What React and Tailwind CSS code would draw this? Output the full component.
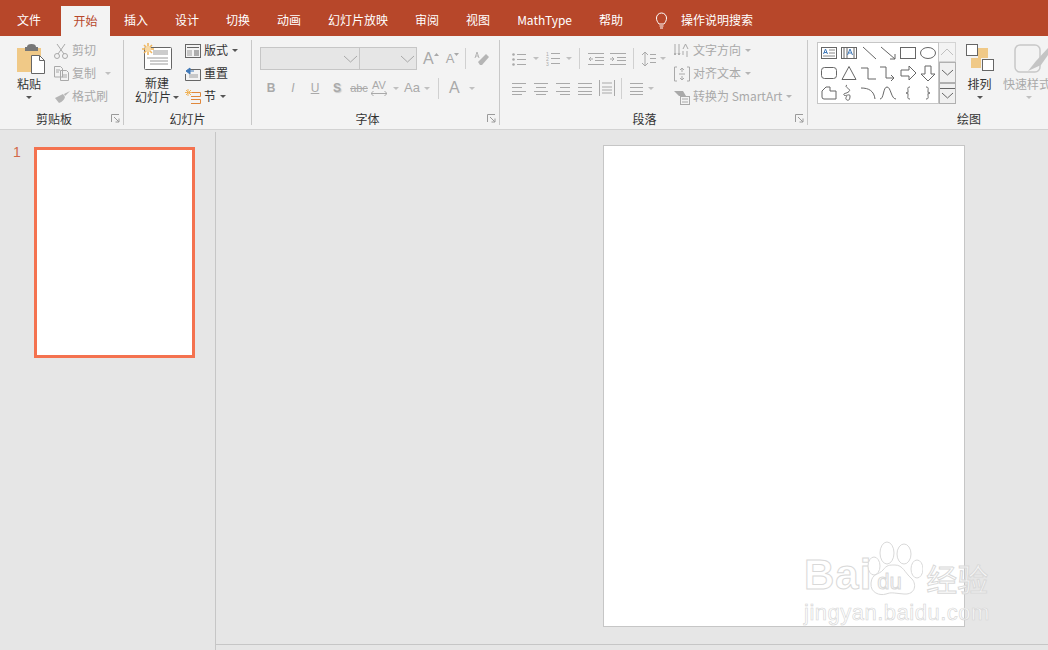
const off = "text-[#a9a9a9]"
const on = "text-[#333333]"

function Ico({ w, h, className = "", children }) {
  return (
    <svg width={w} height={h} viewBox={`0 0 ${w} ${h}`} fill="none" stroke="currentColor" strokeWidth="1" className={`shrink-0 ${className}`}>
      {children}
    </svg>
  )
}

function Caret({ className = "text-[#a9a9a9]" }) {
  return (
    <svg width="6" height="3" viewBox="0 0 6 3" className={`shrink-0 ${className}`}>
      <path d="M0 0h6L3 3z" fill="currentColor" />
    </svg>
  )
}

function Launcher() {
  return (
    <Ico w={9} h={9} className="text-[#9a9a9a]">
      <path d="M.5 8V.5H8M3 3l5 5M8 4.500V8H4.500" />
    </Ico>
  )
}

function Group({ className, label, labelClass = "", launcher, children }) {
  return (
    <div className={`flex flex-col shrink-0 ${className}`}>
      <div className="flex h-[73px] pt-[3px]">{children}</div>
      <div className={`flex h-[20px] items-center justify-center relative text-xs text-[#333333] ${labelClass}`}>
        {label}
        {launcher && <span className="absolute right-[3px] top-[5px] flex"><Launcher /></span>}
      </div>
    </div>
  )
}

function Sep() {
  return <div className="w-px mt-[4px] mb-[4px] bg-[#c8c8c8] shrink-0" />
}

function VBar({ className = "" }) {
  return <div className={`w-px h-[21px] bg-[#d0d0d0] shrink-0 ${className}`} />
}

function Row({ icon, text, color = off, caret, iconBox = "w-[18px]" }) {
  return (
    <div className={`flex items-center h-[23px] text-xs whitespace-nowrap ${color}`}>
      <span className={`flex ${iconBox}`}>{icon}</span>
      <span className="pb-[2px]">{text}</span>
      {caret && <span className="flex ml-[4px]"><Caret className={color === on ? "text-[#555555]" : "text-[#b5b5b5]"} /></span>}
    </div>
  )
}

function HLines({ w = 14, ys, x0 = [], stroke }) {
  return (
    <Ico w={w} h={14} className="text-[#a9a9a9]">
      {ys.map((y, i) => (
        <path key={i} d={`M${x0[i] ?? 0} ${y + 0.5}H${stroke ? stroke[i] : w}`} />
      ))}
    </Ico>
  )
}

const galleryIcons = [
  <g key="0"><rect x="1.5" y="3.5" width="15" height="11" /><path d="M9 6h6M9 9h6M3 12h12" stroke="#888888" /><path d="M3.500 10l2-5 2 5M4 8.500h3" stroke="#3f78b8" /></g>,
  <g key="1"><rect x="1.5" y="3.5" width="15" height="11" /><path d="M4 4v10M7 4v10M14 4v10" /><path d="M7.500 11l2.500-6 2.500 6M8.500 9h3" stroke="#3f78b8" /></g>,
  <path key="2" d="M3 3l13 12" />,
  <path key="3" d="M2 3l14 12M11 15h5v-5" />,
  <rect key="4" x="1.5" y="3.5" width="15" height="11" />,
  <ellipse key="5" cx="9" cy="9" rx="7.5" ry="5.5" />,
  <rect key="6" x="1.5" y="3.5" width="15" height="11" rx="3" />,
  <path key="7" d="M9 2.500L16 15.500H2z" />,
  <path key="8" d="M1 4h7v11h8" />,
  <path key="9" d="M1 3h6v11h8M12 11l3 3-3 3" />,
  <path key="10" d="M2 6h8V2l7 7-7 7v-4H2z" />,
  <path key="11" d="M6 2h6v8h4l-7 7-7-7h4z" />,
  <path key="12" d="M2 7l4-4h4v4h6v8H4q-2 0-2-2z" />,
  <path key="13" d="M7 1c-4 2 5 4 2 6.500S3 9 4 11s6-2 6 1-1 5-3 4-1-3 0-4" />,
  <path key="14" d="M1 4c8 0 13 3 14 11" />,
  <path key="15" d="M1 15C5 15 4 3 8 3s4 12 9 12" />,
  <path key="16" d="M11 3C8 3 9 5 9 7s0 2-2 2c2 0 2 0 2 2s-1 4 2 4" />,
  <path key="17" d="M7 3c3 0 2 2 2 4s0 2 2 2c-2 0-2 0-2 2s1 4-2 4" />,
]

export default function App() {
  const tabs = ["插入", "设计", "切换", "动画", "幻灯片放映", "审阅", "视图", "MathType", "帮助"]
  return (
    <div className="relative w-[1048px] h-[650px] overflow-hidden flex flex-col bg-[#e6e6e6] font-['Noto_Sans_CJK_SC','Noto_Sans',sans-serif]">
      {/* tabs */}
      <div className="flex h-[36px] bg-[#b7472a] text-white text-xs shrink-0">
        <div className="ml-[4px] mr-[7px] px-[13px] flex items-center pt-[4px]">文件</div>
        <div className="mt-[6px] mr-px w-[49px] justify-center bg-[#f3f3f3] text-[#b7472a] flex items-center">开始</div>
        {tabs.map(t => (
          <div key={t} className="mr-px px-[13px] flex items-center pt-[4px] whitespace-nowrap">{t}</div>
        ))}
        <div className="ml-[19px] flex items-center pt-[4px]">
          <Ico w={11} h={17} className="text-white">
            <path d="M3 12C1.500 10 .5 8.500 .5 6a5 5 0 0 1 10 0c0 2.500-1 4-2.500 6zM3.500 14h4M4 16h3" />
          </Ico>
          <span className="ml-[14px]">操作说明搜索</span>
        </div>
      </div>

      {/* ribbon */}
      <div className="flex h-[94px] bg-[#f3f3f3] border-b border-[#d2d2d2] shrink-0 overflow-hidden">
        <Group className="w-[123px]" label="剪贴板" labelClass="pr-[15px]" launcher>
          <div className="ml-[17px] w-[28px] flex flex-col">
            <svg width="28" height="30" viewBox="0 0 28 30" className="mt-[5px]">
              <path d="M0 4h24v24H0z" fill="#f0c987" />
              <path d="M10 3q0-3 4.500-3T19 3h2v4H8V3z" fill="#777777" />
              <path d="M14.500 11.500h8l5 5v13h-13z" fill="#ffffff" stroke="#666666" />
              <path d="M22.500 11.500v5h5" fill="none" stroke="#666666" />
            </svg>
            <span className="mt-[2px] text-xs leading-4 text-[#333333] whitespace-nowrap">粘贴</span>
            <span className="flex justify-center mt-[4px] pr-[4px]"><Caret className="text-[#555555]" /></span>
          </div>
          <div className="ml-[9px] flex flex-col">
            <Row text="剪切" icon={<Ico w={14} h={16} className="text-[#a9a9a9]"><path d="M3 1l7 10M11 1L4 11" /><circle cx="3" cy="13" r="2.500" /><circle cx="11" cy="13" r="2.500" /></Ico>} />
            <div className="flex items-center">
              <Row text="复制" icon={<Ico w={15} h={15} className="text-[#a9a9a9]"><path d="M.5.5h6l2 2V11H.5zM6.500 4.500h6l2 2v8h-8zM2 4h4M2 6h3M8 9h5M8 11h5" /></Ico>} />
              <span className="flex ml-[9px]"><Caret className="text-[#c0c0c0]" /></span>
            </div>
            <Row text="格式刷" icon={<Ico w={16} h={13} className="text-[#b5b5b5]"><path d="M16 1l-6 3 1 2zM9 4L1 8l4 5q5-2 6-6z" fill="currentColor" stroke="none" /></Ico>} />
          </div>
        </Group>
        <Sep />

        <Group className="w-[127px]" label="幻灯片">
          <div className="ml-[11px] w-[50px] flex flex-col items-start">
            <svg width="30" height="28" viewBox="0 0 30 28" className="mt-[4px] ml-[7px]">
              <rect x="2.500" y="4.500" width="27" height="22" rx="1" fill="#ffffff" stroke="#666666" />
              <rect x="11" y="7" width="15" height="5" fill="#cccccc" />
              <path d="M5 15h21M8 18h18M8 21h18" stroke="#9a9a9a" />
              <path d="M6 0v12M0 6h12M2 2l8 8M10 2l-8 8" stroke="#f0b45a" strokeWidth="1.500" />
              <circle cx="6" cy="6" r="3" fill="#f7d9a5" />
            </svg>
            <span className="mt-[5px] ml-[10px] text-xs leading-[14px] text-[#333333]">新建</span>
            <span className="flex items-center text-xs leading-[14px] text-[#333333] whitespace-nowrap">幻灯片<span className="flex ml-[2px]"><Caret className="text-[#555555]" /></span></span>
          </div>
          <div className="flex flex-col">
            <Row color={on} caret text="版式" iconBox="w-[19px]" icon={<Ico w={16} h={14} className="text-[#666666]"><rect x=".5" y=".5" width="15" height="13" /><path d="M2 3.500h12" /><rect x="2" y="6" width="5" height="6" fill="#c8c8c8" stroke="none" /><path d="M9 7h5M9 9h5M9 11h5" /></Ico>} />
            <Row color={on} text="重置" iconBox="w-[19px]" icon={<Ico w={16} h={14} className="text-[#666666]"><path d="M5 2.500h10.500v11H.5V7" /><rect x="4" y="7" width="9" height="4" fill="#c8c8c8" stroke="none" /><path d="M1 4l4-3v6zM4 4h5" fill="#3f78b8" stroke="#3f78b8" /></Ico>} />
            <Row color={on} caret text="节" iconBox="w-[19px]" icon={<Ico w={16} h={15} className="text-[#666666]"><path d="M6 3.500h9.500v4H6M6 10.500h9.500v4H6" stroke="#e0883c" /><path d="M3 0v7M0 3.500h7M1 1l5 5M6 1L1 6" stroke="#f0b45a" /></Ico>} />
          </div>
        </Group>
        <Sep />

        <Group className="w-[247px]" label="字体" labelClass="pr-[16px]" launcher>
          <div className="pl-[8px] flex flex-col">
            <div className="mt-[8px] flex items-center h-[23px]">
              <div className="w-[100px] h-[23px] bg-[#e6e6e6] border border-[#c6c6c6] flex items-center justify-end pr-[1px]">
                <Ico w={15} h={8} className="text-[#a9a9a9]"><path d="M1 1l6.500 6L14 1" /></Ico>
              </div>
              <div className="w-[58px] h-[23px] -ml-px bg-[#e6e6e6] border border-[#c6c6c6] flex items-center justify-end pr-[1px]">
                <Ico w={15} h={8} className="text-[#a9a9a9]"><path d="M1 1l6.500 6L14 1" /></Ico>
              </div>
              <span className={`ml-[6px] text-[16px] leading-none font-['Liberation_Sans'] ${off}`}>A</span>
              <span className="flex mb-[9px]"><svg width="5" height="3"><path d="M0 3h5L2.500 0z" fill="#a9a9a9" /></svg></span>
              <span className={`ml-[7px] text-[13px] leading-none font-['Liberation_Sans'] ${off}`}>A</span>
              <span className="flex mb-[9px]"><svg width="5" height="3"><path d="M0 0h5L2.500 3z" fill="#a9a9a9" /></svg></span>
              <VBar className="ml-[6px]" />
              <Ico w={16} h={16} className="ml-[8px] text-[#b5b5b5]"><path d="M4 11l8-8 3 3-7 8H6z" fill="currentColor" stroke="none" /><path d="M1 7l2-6 2 6M2 5h2" /></Ico>
            </div>
            <div className={`mt-[7px] flex items-center h-[22px] text-xs font-['Liberation_Sans'] ${off}`}>
              <span className="w-[22px] text-center font-bold">B</span>
              <span className="w-[22px] text-center italic">I</span>
              <span className="w-[22px] text-center underline">U</span>
              <span className="w-[22px] text-center font-bold [text-shadow:1px_1px_1px_#c8c8c8]">S</span>
              <span className="w-[22px] text-center line-through text-[11px]">abc</span>
              <span className="w-[18px] flex flex-col items-center text-[11px] leading-[11px]">AV
                <Ico w={16} h={5} className="text-[#a9a9a9]"><path d="M0 2.500h16M2.500 0L0 2.500 2.500 5M13.500 0L16 2.500 13.500 5" /></Ico>
              </span>
              <span className="flex ml-[5px]"><Caret className="text-[#c0c0c0]" /></span>
              <span className="ml-[5px] w-[16px] text-[13px] text-center">Aa</span>
              <span className="flex ml-[4px]"><Caret className="text-[#c0c0c0]" /></span>
              <VBar className="ml-[8px]" />
              <span className="ml-[10px] text-[16px]">A</span>
              <span className="flex ml-[9px]"><Caret className="text-[#c0c0c0]" /></span>
            </div>
          </div>
        </Group>
        <Sep />

        <Group className="w-[307px]" label="段落" labelClass="pr-[18px]" launcher>
          <div className="pl-[12px] w-[174px] shrink-0 flex flex-col">
            <div className="mt-[8px] flex items-center h-[23px]">
              <Ico w={14} h={14} className="text-[#a9a9a9]">
                <path d="M5 2.500h9M5 7.500h9M5 12.500h9" />
                <circle cx="1.500" cy="2.500" r="1.300" fill="currentColor" stroke="none" />
                <circle cx="1.500" cy="7.500" r="1.300" fill="currentColor" stroke="none" />
                <circle cx="1.500" cy="12.500" r="1.300" fill="currentColor" stroke="none" />
              </Ico>
              <span className="flex ml-[7px]"><Caret className="text-[#c0c0c0]" /></span>
              <span className="flex ml-[7px]">
                <Ico w={14} h={15} className="text-[#a9a9a9]">
                  <path d="M5 2.500h9M5 7.500h9M5 12.500h9" />
                  <g fill="currentColor" stroke="none" fontSize="5" fontFamily="Liberation Sans">
                    <text x="0" y="4.500">1</text>
                    <text x="0" y="9.500">2</text>
                    <text x="0" y="14.500">3</text>
                  </g>
                </Ico>
              </span>
              <span className="flex ml-[6px]"><Caret className="text-[#c0c0c0]" /></span>
              <VBar className="ml-[7px]" />
              <span className="flex ml-[8px]"><Ico w={16} h={12} className="text-[#a9a9a9]"><path d="M0 .5h16M7 4.500h9M7 7.500h9M0 11.500h16M5 6H1M3 4L1 6l2 2" /></Ico></span>
              <span className="flex ml-[6px]"><Ico w={16} h={12} className="text-[#a9a9a9]"><path d="M0 .5h16M7 4.500h9M7 7.500h9M0 11.500h16M0 6h4M2 4l2 2-2 2" /></Ico></span>
              <VBar className="ml-[7px]" />
              <span className="flex ml-[8px]"><Ico w={14} h={16} className="text-[#a9a9a9]"><path d="M3 1v14M0 4l3-3 3 3M0 12l3 3 3-3M8 3.500h6M8 7.500h6M8 11.500h6" /></Ico></span>
              <span className="flex ml-[4px]"><Caret className="text-[#c0c0c0]" /></span>
            </div>
            <div className="mt-[7px] flex items-center h-[22px]">
              <HLines ys={[2, 6, 10, 13]} stroke={[14, 10, 14, 10]} />
              <span className="flex ml-[8px]"><HLines ys={[2, 6, 10, 13]} x0={[0, 2, 0, 2]} stroke={[14, 12, 14, 12]} /></span>
              <span className="flex ml-[8px]"><HLines ys={[2, 6, 10, 13]} x0={[0, 4, 0, 4]} /></span>
              <span className="flex ml-[8px]"><HLines ys={[2, 6, 10, 13]} /></span>
              <span className="flex ml-[7px]"><Ico w={16} h={16} className="text-[#a9a9a9]"><path d="M.5 0v16M15.500 0v16M3 3h10M3 7h10M3 10h10M3 13h10" /></Ico></span>
              <VBar className="ml-[6px]" />
              <span className="flex ml-[8px]"><HLines w={13} ys={[2, 6, 10, 13]} /></span>
              <span className="flex ml-[5px]"><Caret className="text-[#c0c0c0]" /></span>
            </div>
          </div>
          <div className="flex flex-col">
            <Row caret text="文字方向" iconBox="w-[19px]" icon={<Ico w={16} h={16} className="text-[#a9a9a9]"><path d="M1 1v11M5 1v11M1 12l-1-2M1 12l1-2M5 12l-1-2M5 12l1-2M9 12V8M13 8v6" /><path d="M9 6l2.500-5L14 6" /></Ico>} />
            <Row caret text="对齐文本" iconBox="w-[19px]" icon={<Ico w={16} h={16} className="text-[#a9a9a9]"><path d="M3 1H.5v14H3M13 1h2.500v14H13M8 2v4M6 4l2-2 2 2M8 14v-4M6 12l2 2 2-2M5 8h6" /></Ico>} />
            <Row caret text="转换为 SmartArt" iconBox="w-[19px]" icon={<Ico w={16} h={16} className="text-[#a9a9a9]"><path d="M0 2h9l3 5H5z" fill="currentColor" stroke="none" /><rect x="6.500" y="7.500" width="9" height="8" /><path d="M8 10h6M8 13h6" /></Ico>} />
          </div>
        </Group>
        <Sep />

        <Group className="w-[240px]" label="绘图" labelClass="pl-[82px]">
          <div className="ml-[9px] mt-[3px] h-[62px] w-[122px] shrink-0 bg-white border border-[#c6c6c6] grid grid-cols-6 pl-px text-[#666666]">
            {galleryIcons.map((g, i) => (
              <span key={i} className="flex items-center justify-center">
                <svg width="18" height="18" viewBox="0 0 18 18" fill="none" stroke="currentColor">{g}</svg>
              </span>
            ))}
          </div>
          <div className="mt-[3px] w-[17px] h-[62px] shrink-0 flex flex-col text-[#666666]">
            <div className="h-[20px] bg-[#f3f3f3] border-y border-r border-[#d4d4d4] flex items-center justify-center text-[#c0c0c0]">
              <Ico w={14} h={8}><path d="M1 7l6-6 6 6" /></Ico>
            </div>
            <div className="h-[21px] bg-[#f0f0f0] border border-[#b0b0b0] flex items-center justify-center">
              <Ico w={13} h={7}><path d="M1 1l5.500 5L12 1" /></Ico>
            </div>
            <div className="h-[21px] bg-[#f0f0f0] border border-[#b0b0b0] flex flex-col items-center justify-center gap-[3px]">
              <Ico w={15} h={1}><path d="M0 .5h15" /></Ico>
              <Ico w={13} h={7}><path d="M1 1l5.500 5L12 1" /></Ico>
            </div>
          </div>
          <div className="ml-[10px] w-[27px] shrink-0 flex flex-col items-center">
            <svg width="28" height="28" viewBox="0 0 28 28" className="mt-[5px]">
              <rect x="12" y="4" width="10" height="10" fill="#f0c987" />
              <rect x="5" y="14" width="10" height="10" fill="#f0c987" />
              <rect x=".5" y=".5" width="11" height="11" fill="#ffffff" stroke="#666666" />
              <rect x="16.500" y="15.500" width="11" height="11" fill="#ffffff" stroke="#666666" />
            </svg>
            <span className="mt-[4px] text-xs leading-4 text-[#333333] whitespace-nowrap">排列</span>
            <span className="flex mt-[4px]"><Caret className="text-[#555555]" /></span>
          </div>
          <div className="ml-[10px] flex flex-col items-start">
            <svg width="36" height="30" viewBox="0 0 36 30" className="ml-[11px] mt-[5px]">
              <rect x="1" y="1" width="25" height="27" rx="5" fill="none" stroke="#c8c8c8" strokeWidth="1.500" />
              <path d="M34 4l-12 13-8 10 13-6 9-13z" fill="#c4c4c4" />
            </svg>
            <span className={`mt-[2px] text-xs leading-4 whitespace-nowrap ${off}`}>快速样式</span>
            <span className="flex mt-[4px] ml-[23px]"><Caret className="text-[#c0c0c0]" /></span>
          </div>
        </Group>
      </div>

      {/* workspace */}
      <div className="flex flex-1 min-h-0">
        <div className="w-[215px] shrink-0 flex pt-[17px]">
          <span className="ml-[13px] w-[21px] text-[14px] leading-[16px] mt-[-3px] text-[#d2694a] font-['Liberation_Sans']">1</span>
          <div className="w-[161px] h-[211px] bg-white border-[3px] border-[#f4724f]" />
        </div>
        <div className="w-px mt-[2px] bg-[#c6c6c6] shrink-0" />
        <div className="flex-1 flex flex-col">
          <div className="h-[514px] shrink-0 pl-[387px] pt-[15px]">
            <div className="w-[362px] h-[482px] bg-white border border-[#c6c6c6]" />
          </div>
          <div className="flex-1 border-t border-[#c6c6c6]" />
        </div>
      </div>

      {/* baidu watermark */}
      <div className="absolute left-[804px] top-[535px] w-[190px] h-[95px] text-white/70 font-['Liberation_Sans'] [-webkit-text-stroke:1px_#d9d9d9] pointer-events-none">
        <div className="flex items-end h-[63px]">
          <span className="text-[42px] leading-[46px] font-bold tracking-[1px]">Bai</span>
          <svg width="58" height="62" viewBox="0 0 58 62" fill="none" stroke="#d9d9d9" className="shrink-0 -ml-[7px] mb-[-3px]">
            <ellipse cx="22" cy="14" rx="7" ry="11" fill="#ffffff" />
            <ellipse cx="39" cy="15" rx="7" ry="10" fill="#ffffff" />
            <ellipse cx="9" cy="27" rx="6" ry="9" fill="#ffffff" />
            <ellipse cx="52" cy="30" rx="6" ry="9" fill="#ffffff" />
            <path d="M30 26c8 0 10 8 16 13s5 17-7 16-12-2-18 0-16-1-15-11 8-8 12-13 6-5 12-5z" fill="#ffffff" />
          </svg>
          <span className="-ml-[46px] w-[46px] text-[22px] leading-[32px]">du</span>
          <span className="ml-[3px] text-[31px] leading-[40px] font-['Noto_Sans_CJK_SC'] whitespace-nowrap">经验</span>
        </div>
        <div className="text-[22px] leading-[26px] mt-[2px] whitespace-nowrap tracking-[0.5px] [-webkit-text-stroke:0.6px_#d4d4d4]">jingyan.baidu.com</div>
      </div>
    </div>
  )
}
